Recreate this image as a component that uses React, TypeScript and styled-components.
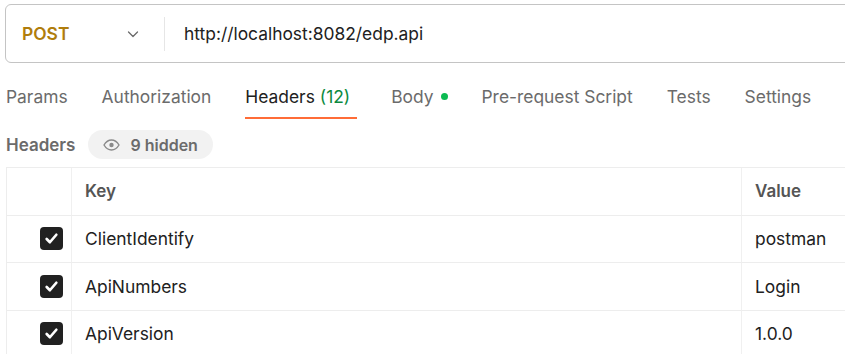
import React from "react";
import styled, { createGlobalStyle } from "styled-components";

const GlobalStyle = createGlobalStyle`
  html, body {
    margin: 0;
    padding: 0;
    background: #fff;
    overflow: hidden;
  }
  body {
    font-family: Inter, "Noto Sans", "Liberation Sans", sans-serif;
    color: #212121;
  }
`;

const Page = styled.div`
  width: 845px;
  height: 354px;
  overflow: hidden;
  padding: 4px 0 0 5px;
  box-sizing: border-box;
`;

const UrlBar = styled.div`
  display: flex;
  align-items: center;
  width: 900px;
  height: 59px;
  box-sizing: border-box;
  border: 1.5px solid #c4c4c4;
  border-radius: 6px;
  background: #fff;
`;

const Method = styled.div`
  display: flex;
  align-items: center;
  justify-content: space-between;
  width: 158px;
  box-sizing: border-box;
  padding: 0 24px 0 16px;
  font-size: 17.4px;
  font-weight: 600;
  color: #b07d0c;
`;

const Divider = styled.div`
  width: 1px;
  height: 34px;
  background: #e6e6e6;
`;

const UrlText = styled.div`
  padding-left: 19px;
  font-size: 17.4px;
  color: #212121;
`;

const Tabs = styled.div`
  display: flex;
  gap: 34px;
  margin-top: 13px;
  padding-left: 1px;
`;

const Tab = styled.div<{ $active?: boolean }>`
  display: flex;
  align-items: center;
  gap: 7px;
  height: 43px;
  box-sizing: border-box;
  padding-right: ${({ $active }) => ($active ? "7px" : "0")};
  font-size: 17.4px;
  color: ${({ $active }) => ($active ? "#212121" : "#6b6b6b")};
  border-bottom: 2px solid ${({ $active }) => ($active ? "#ff6c37" : "transparent")};
`;

const Count = styled.span`
  color: #0b8a3e;
  margin-left: -2px;
`;

const Dot = styled.span`
  width: 7px;
  height: 7px;
  border-radius: 50%;
  background: #0cbb52;
`;

const HeadersBar = styled.div`
  display: flex;
  align-items: center;
  gap: 13px;
  margin-top: 11px;
  padding-left: 1px;
`;

const Label = styled.div`
  font-size: 17px;
  font-weight: 600;
  color: #6b6b6b;
`;

const HiddenPill = styled.div`
  display: flex;
  align-items: center;
  gap: 10px;
  height: 29px;
  padding: 0 15px;
  border-radius: 15px;
  background: #f2f2f2;
  font-size: 16px;
  font-weight: 600;
  color: #6b6b6b;
`;

const Table = styled.div`
  display: grid;
  grid-template-columns: 65px 670px 1fr;
  grid-auto-rows: 47.5px;
  width: 950px;
  margin-top: 8px;
  margin-left: 1px;
  border-top: 1px solid #ededed;
  border-left: 1px solid #ededed;
`;

const Cell = styled.div<{ $head?: boolean; $check?: boolean }>`
  display: flex;
  align-items: center;
  justify-content: ${({ $check }) => ($check ? "flex-end" : "flex-start")};
  box-sizing: border-box;
  padding: ${({ $check }) => ($check ? "0 8px 0 0" : "0 0 0 13px")};
  border-right: 1px solid #f0f0f0;
  border-bottom: 1px solid #ededed;
  font-size: ${({ $head }) => ($head ? "17px" : "17.4px")};
  font-weight: ${({ $head }) => ($head ? 600 : 400)};
  color: ${({ $head }) => ($head ? "#555" : "#212121")};
`;

const Box = styled.div`
  display: flex;
  align-items: center;
  justify-content: center;
  width: 23px;
  height: 23px;
  border-radius: 4px;
  background: #212121;
`;

const Chevron = () => (
  <svg width="14" height="14" viewBox="0 0 14 14" fill="none">
    <path d="M2.5 5l4.5 4.5L11.5 5" stroke="#6b6b6b" strokeWidth="1.3" strokeLinecap="round" strokeLinejoin="round" />
  </svg>
);

const Eye = () => (
  <svg width="17" height="12" viewBox="0 0 17 12" fill="none">
    <path d="M1 6c2-3.3 4.5-5 7.5-5s5.5 1.7 7.5 5c-2 3.3-4.5 5-7.5 5S3 9.3 1 6z" stroke="#8a8a8a" strokeWidth="1.4" />
    <circle cx="8.5" cy="6" r="2.2" fill="#8a8a8a" />
  </svg>
);

const Check = () => (
  <svg width="15" height="15" viewBox="0 0 14 14" fill="none">
    <path d="M2.5 7.5l3 3 6-7" stroke="#fff" strokeWidth="2.5" strokeLinecap="round" strokeLinejoin="round" />
  </svg>
);

const rows = [
  { key: "ClientIdentify", value: "postman" },
  { key: "ApiNumbers", value: "Login" },
  { key: "ApiVersion", value: "1.0.0" },
];

const App: React.FC = () => {
  return (
    <>
      <GlobalStyle />
      <Page>
        <UrlBar>
          <Method>
            POST
            <Chevron />
          </Method>
          <Divider />
          <UrlText>http://localhost:8082/edp.api</UrlText>
        </UrlBar>

        <Tabs>
          <Tab>Params</Tab>
          <Tab>Authorization</Tab>
          <Tab $active>
            Headers <Count>(12)</Count>
          </Tab>
          <Tab>
            Body <Dot />
          </Tab>
          <Tab>Pre-request Script</Tab>
          <Tab>Tests</Tab>
          <Tab>Settings</Tab>
        </Tabs>

        <HeadersBar>
          <Label>Headers</Label>
          <HiddenPill>
            <Eye />
            9 hidden
          </HiddenPill>
        </HeadersBar>

        <Table>
          <Cell $head $check />
          <Cell $head>Key</Cell>
          <Cell $head>Value</Cell>
          {rows.map((r) => (
            <React.Fragment key={r.key}>
              <Cell $check>
                <Box>
                  <Check />
                </Box>
              </Cell>
              <Cell>{r.key}</Cell>
              <Cell>{r.value}</Cell>
            </React.Fragment>
          ))}
        </Table>
      </Page>
    </>
  );
};

export default App;
